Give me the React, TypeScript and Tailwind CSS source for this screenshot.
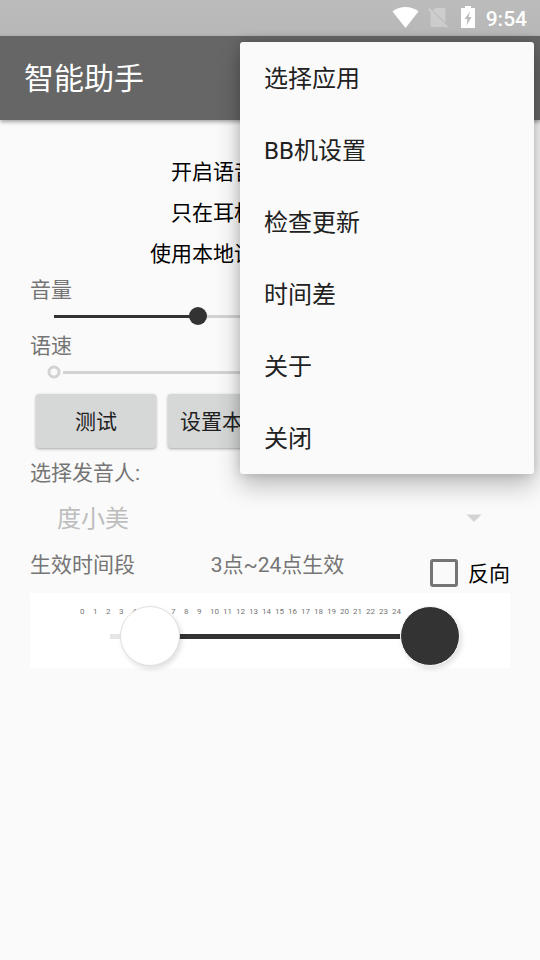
import { useState } from 'react';

const menuItems = ['选择应用', 'BB机设置', '检查更新', '时间差', '关于', '关闭'];

const switches = [
  { id: 'voice', label: '开启语音播报' },
  { id: 'headset', label: '只在耳机播报' },
  { id: 'local', label: '使用本地语音引擎' },
];

const hours = Array.from({ length: 25 }, (_, i) => i);

export default function App() {
  return (
    <div
      className="relative min-h-screen bg-[#fafafa] text-[21px] leading-7 text-black"
      style={{ fontFamily: 'Roboto, "Noto Sans CJK SC", sans-serif' }}
    >
      <StatusBar />
      <header className="relative flex h-[84px] items-center bg-[#666666] px-6 pt-0.5 shadow-[0_2px_4px_rgba(0,0,0,0.35)]">
        <h1 className="text-[30px] leading-9 text-white">智能助手</h1>
      </header>

      <main className="px-[30px] pt-[31px]">
        {switches.map((s) => (
          <SwitchRow key={s.id} {...s} />
        ))}
        <div className="flex flex-col gap-1 pt-0.5">
          <Volume />
          <Speed />
        </div>

        <div className="flex gap-3 px-1.5 pt-[10px] pb-[11px]">
          <ActionButton>测试</ActionButton>
          <ActionButton>设置本地语音</ActionButton>
        </div>

        <VoiceSelect />
        <TimeRange />
      </main>

      <OverflowMenu />
    </div>
  );
}

function StatusBar() {
  return (
    <div className="flex h-9 items-center justify-end bg-linear-to-b from-[#bcbcbc] to-[#b7b7b7] pr-[13px] text-white">
      <svg className="h-9 w-[86px]" viewBox="0 0 86 36" fill="currentColor" aria-hidden="true">
        {/* wifi */}
        <path d="M13.5 28 26.500 11.500C23 8.500 18.500 7 13.500 7S4 8.500.5 11.500z" />
        {/* no sim */}
        <g opacity="0.28">
          <path d="M43.500 8H52q1.500 0 1.500 1.500V22.500L41 10.500z" />
          <path d="M36 9.500 37.500 8 56 26.500 54.500 28 53.300 26.800Q52.700 27 52 27H40q-1.500 0-1.500-1.500V12z" />
        </g>
        {/* battery */}
        <path
          fillRule="evenodd"
          d="M73 6h6v2h3.500q.5 0 .5.500v19q0 .5-.5.500h-13q-.5 0-.5-.500v-19q0-.5.500-.500H73zM78 11.500 72.500 19H75.500L74.500 25.500 79.500 17H76.500z"
        />
      </svg>
      <span className="pl-2 pt-0.5 text-[21px] font-medium leading-9">9:54</span>
    </div>
  );
}

function SwitchRow({ id, label }: { id: string; label: string }) {
  return (
    <div className="flex h-[41px] items-center justify-center">
      <label htmlFor={id}>{label}</label>
      <span className="flex w-[72px] justify-center">
        <input id={id} type="checkbox" role="switch" className="h-5 w-10 accent-[#333333]" />
      </span>
    </div>
  );
}

function Volume() {
  const [value, setValue] = useState(5);
  return (
    <div>
      <label htmlFor="volume" className="block text-[#757575]">音量</label>
      <div className="grid h-6 items-center">
        <div className="col-start-1 row-start-1 mx-6 h-[3px] bg-[#d3d3d3]">
          <div className="h-full bg-[#333333]" style={{ width: `${(value / 15) * 100}%` }} />
        </div>
        <input
          id="volume"
          type="range"
          min={0}
          max={15}
          value={value}
          onChange={(e) => setValue(Number(e.target.value))}
          className="z-0 col-start-1 row-start-1 mx-[15px] h-[18px] appearance-none bg-transparent [&::-webkit-slider-thumb]:size-[18px] [&::-webkit-slider-thumb]:appearance-none [&::-webkit-slider-thumb]:rounded-full [&::-webkit-slider-thumb]:bg-[#333333]"
        />
      </div>
    </div>
  );
}

function Speed() {
  return (
    <div>
      <label htmlFor="speed" className="block text-[#757575]">语速</label>
      <div className="grid h-6 items-center">
        <div className="col-start-1 row-start-1 mx-6 h-[3px] bg-[#d3d3d3]" />
        <input
          id="speed"
          type="range"
          min={0}
          max={10}
          defaultValue={0}
          disabled
          className="z-0 col-start-1 row-start-1 mx-[15px] h-[18px] appearance-none bg-transparent [&::-webkit-slider-thumb]:size-[18px] [&::-webkit-slider-thumb]:appearance-none [&::-webkit-slider-thumb]:bg-[radial-gradient(circle,#fafafa_3px,#d3d3d3_4px,#d3d3d3_6px,#fafafa_7px)]"
        />
      </div>
    </div>
  );
}

function ActionButton({ children }: { children: string }) {
  return (
    <button
      type="button"
      className="h-[54px] min-w-[120px] rounded-[3px] bg-[#d6d7d7] px-3 pt-0.5 text-[#212121] shadow-[0_1px_3px_rgba(0,0,0,0.35)]"
    >
      {children}
    </button>
  );
}

function VoiceSelect() {
  return (
    <div>
      <label htmlFor="voice-name" className="block text-[#757575]">选择发音人:</label>
      <div className="grid h-[62px] items-center">
        <select
          id="voice-name"
          disabled
          className="col-start-1 row-start-1 h-12 appearance-none bg-transparent px-[27px] pt-0.5 text-2xl text-[#bdbdbd] opacity-100"
        >
          <option>度小美</option>
        </select>
        <svg
          className="pointer-events-none col-start-1 row-start-1 mr-7 h-2 w-4 justify-self-end"
          viewBox="0 0 16 8"
          fill="#d3d3d3"
          aria-hidden="true"
        >
          <path d="M.5.500h15L8 8z" />
        </svg>
      </div>
    </div>
  );
}

function TimeRange() {
  const [from, setFrom] = useState(3);
  const [to, setTo] = useState(24);

  const thumb =
    'pointer-events-none z-0 col-start-1 row-start-1 h-[60px] appearance-none bg-transparent [&::-webkit-slider-thumb]:pointer-events-auto [&::-webkit-slider-thumb]:size-[60px] [&::-webkit-slider-thumb]:appearance-none [&::-webkit-slider-thumb]:rounded-full [&::-webkit-slider-thumb]:border [&::-webkit-slider-thumb]:shadow-[2px_3px_5px_rgba(0,0,0,0.12)]';

  return (
    <section>
      <div className="flex pt-0.5 text-[#757575]">
        <span>生效时间段</span>
        <output className="flex-1 text-center">{`${from}点~${to}点生效`}</output>
        <label className="mt-0.5 flex h-10 items-center text-black">
          <span className="flex w-12 justify-center">
            <input
              type="checkbox"
              className="size-7 appearance-none rounded-[3px] border-3 border-[#757575] checked:bg-[#333333]"
            />
          </span>
          <span className="pt-0.5">反向</span>
        </label>
      </div>

      <div className="grid h-[75px] bg-white px-[50px]">
        <div className="col-start-1 row-start-1 mt-[13px] flex text-[8px] leading-3 text-[#757575]">
          {hours.map((h) => (
            <span key={h} className="w-[13px] shrink-0">{h}</span>
          ))}
        </div>
        <div className="col-start-1 row-start-1 mt-[13px] grid h-[60px] items-center">
          <div className="col-start-1 row-start-1 mx-[30px] h-[5px] bg-[#e6e6e6]">
            <div
              className="h-full bg-[#333333]"
              style={{ marginLeft: `${(from / 24) * 100}%`, width: `${((to - from) / 24) * 100}%` }}
            />
          </div>
          <input
            type="range"
            aria-label="开始时间"
            min={0}
            max={24}
            value={from}
            onChange={(e) => setFrom(Math.min(Number(e.target.value), to))}
            className={`${thumb} [&::-webkit-slider-thumb]:border-[#e0e0e0] [&::-webkit-slider-thumb]:bg-white`}
          />
          <input
            type="range"
            aria-label="结束时间"
            min={0}
            max={24}
            value={to}
            onChange={(e) => setTo(Math.max(Number(e.target.value), from))}
            className={`${thumb} [&::-webkit-slider-thumb]:border-white [&::-webkit-slider-thumb]:bg-[#333333]`}
          />
        </div>
      </div>
    </section>
  );
}

function OverflowMenu() {
  return (
    <div
      role="menu"
      className="absolute top-[42px] right-1.5 z-10 flex w-[294px] flex-col rounded-[3px] bg-[#fafafa] shadow-[0_12px_24px_rgba(0,0,0,0.24),0_0_12px_rgba(0,0,0,0.16)]"
    >
      {menuItems.map((item) => (
        <button key={item} type="button" role="menuitem" className="h-[72px] px-6 pt-0.5 text-left text-2xl text-[#212121]">
          {item}
        </button>
      ))}
    </div>
  );
}
